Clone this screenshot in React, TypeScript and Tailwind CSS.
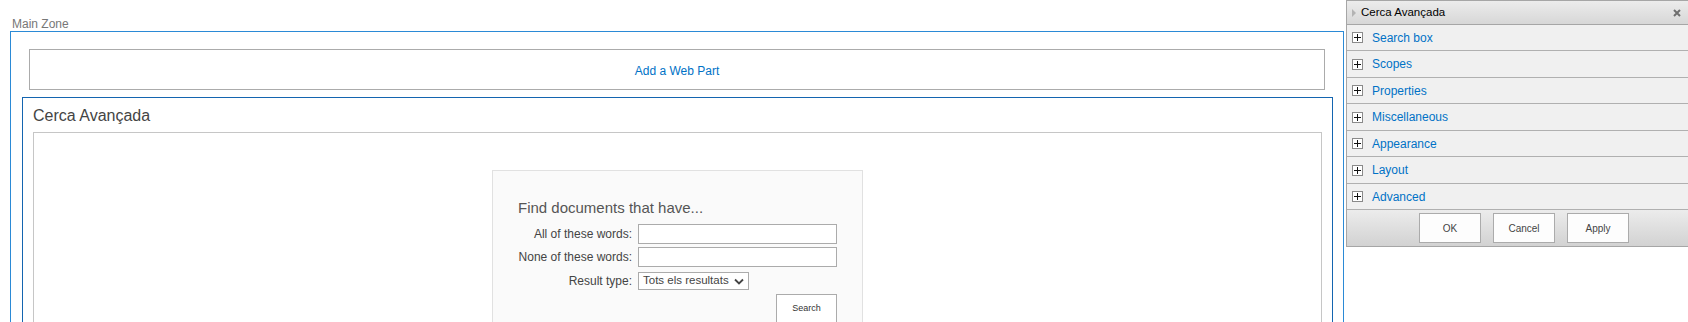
import React from "react";

const font = { fontFamily: '"Liberation Sans", Arial, sans-serif' };

const sections = [
  { name: "Search box", h: "h-[26px]" },
  { name: "Scopes", h: "h-[27px]" },
  { name: "Properties", h: "h-[26px]" },
  { name: "Miscellaneous", h: "h-[27px]" },
  { name: "Appearance", h: "h-[26px]" },
  { name: "Layout", h: "h-[27px]" },
  { name: "Advanced", h: "h-[26px]" },
];

function PlusBox() {
  return (
    <span className="inline-flex h-[11px] w-[11px] shrink-0 items-center justify-center border border-[#8a8a8a] bg-white">
      <svg width="7" height="7" viewBox="0 0 7 7">
        <rect x="0" y="3" width="7" height="1" fill="#111" />
        <rect x="3" y="0" width="1" height="7" fill="#111" />
      </svg>
    </span>
  );
}

function ToolPane() {
  return (
    <div className="w-[356px] shrink-0 self-start border border-[#a6a6a6] bg-[#f0f0f0]">
      {/* header */}
      <div className="flex h-[24px] items-center border-b border-[#a6a6a6] bg-gradient-to-b from-[#ececec] to-[#d7d7d7] pl-[4px] pr-[20px]">
        <svg width="6" height="8" viewBox="0 0 6 8" className="mr-[4px]">
          <path d="M1 0 L5 4 L1 8 Z" fill="#b3b3b3" />
        </svg>
        <span className="text-[11.5px] leading-none text-black">Cerca Avançada</span>
        <span className="ml-auto">
          <svg width="8" height="8" viewBox="0 0 8 8">
            <path d="M1 1 L7 7 M7 1 L1 7" stroke="#6e6e6e" strokeWidth="2" />
          </svg>
        </span>
      </div>
      {/* sections */}
      {sections.map((s) => (
        <div key={s.name} className={`flex ${s.h} items-center border-b border-[#b0b0b0] pl-[5px]`}>
          <PlusBox />
          <span className="ml-[9px] text-[12px] leading-none text-[#0072c6]">{s.name}</span>
        </div>
      ))}
      {/* footer */}
      <div className="flex h-[36px] justify-center gap-[12px] bg-gradient-to-b from-[#ececec] to-[#d2d2d2] pt-[3px]">
        {["OK", "Cancel", "Apply"].map((b) => (
          <div
            key={b}
            className="flex h-[30px] w-[62px] items-center justify-center border border-[#ababab] bg-[#fdfdfd] text-[10px] text-[#444]"
          >
            {b}
          </div>
        ))}
      </div>
    </div>
  );
}

function SearchBox() {
  return (
    <div className="mx-auto mt-[37px] w-[371px] border border-[#e1e1e1] bg-[#fafafa] pb-[20px] pl-[25px] pr-[24px] pt-[28px]">
      <div className="text-[15px] leading-[18px] text-[#555]">Find documents that have...</div>
      <div className="mt-[7px] grid grid-cols-[114px_199px] gap-x-[6px] text-[12px] text-[#444]">
        <div className="flex h-[20px] items-center justify-end">All of these words:</div>
        <div className="h-[20px] border border-[#ababab] bg-white" />
        <div className="mt-[3px] flex h-[20px] items-center justify-end">None of these words:</div>
        <div className="mt-[3px] h-[20px] border border-[#ababab] bg-white" />
        <div className="mt-[5px] flex h-[18px] items-center justify-end">Result type:</div>
        <div className="mt-[5px] flex">
          <div className="flex h-[18px] w-[111px] items-center border border-[#ababab] bg-white pl-[4px] text-[11.5px] text-[#444]">
            Tots els resultats
            <svg width="10" height="7" viewBox="0 0 10 7" className="ml-[5px]">
              <path d="M1 1.5 L5 5.5 L9 1.5" stroke="#444" strokeWidth="1.8" fill="none" />
            </svg>
          </div>
        </div>
        <div />
        <div className="mt-[4px] flex justify-end">
          <div className="flex h-[30px] w-[61px] items-center justify-center border border-[#ababab] bg-white text-[9px] text-[#333]">
            Search
          </div>
        </div>
      </div>
    </div>
  );
}

export default function App() {
  return (
    <div className="flex h-[322px] w-[1688px] overflow-hidden bg-white" style={font}>
      <div className="w-[1346px] shrink-0">
        <div className="pl-[12px] pt-[17px] text-[12px] leading-[14px] text-[#777]">Main Zone</div>
        <div className="ml-[10px] h-[400px] w-[1334px] border border-[#2b8ad6]">
          <div className="px-[18px] pt-[17px]">
            <div className="flex h-[41px] items-center justify-center border border-[#ababab] pt-[2px] text-[12px] text-[#0072c6]">
              Add a Web Part
            </div>
          </div>
          <div className="ml-[11px] mr-[10px] mt-[7px] h-[300px] border border-[#1465b0]">
            <div className="pl-[10px] pt-[8px] text-[16px] leading-[20px] text-[#444]">Cerca Avançada</div>
            <div className="mx-[10px] mt-[6px] h-[300px] border border-[#c6c6c6]">
              <SearchBox />
            </div>
          </div>
        </div>
      </div>
      <ToolPane />
    </div>
  );
}
